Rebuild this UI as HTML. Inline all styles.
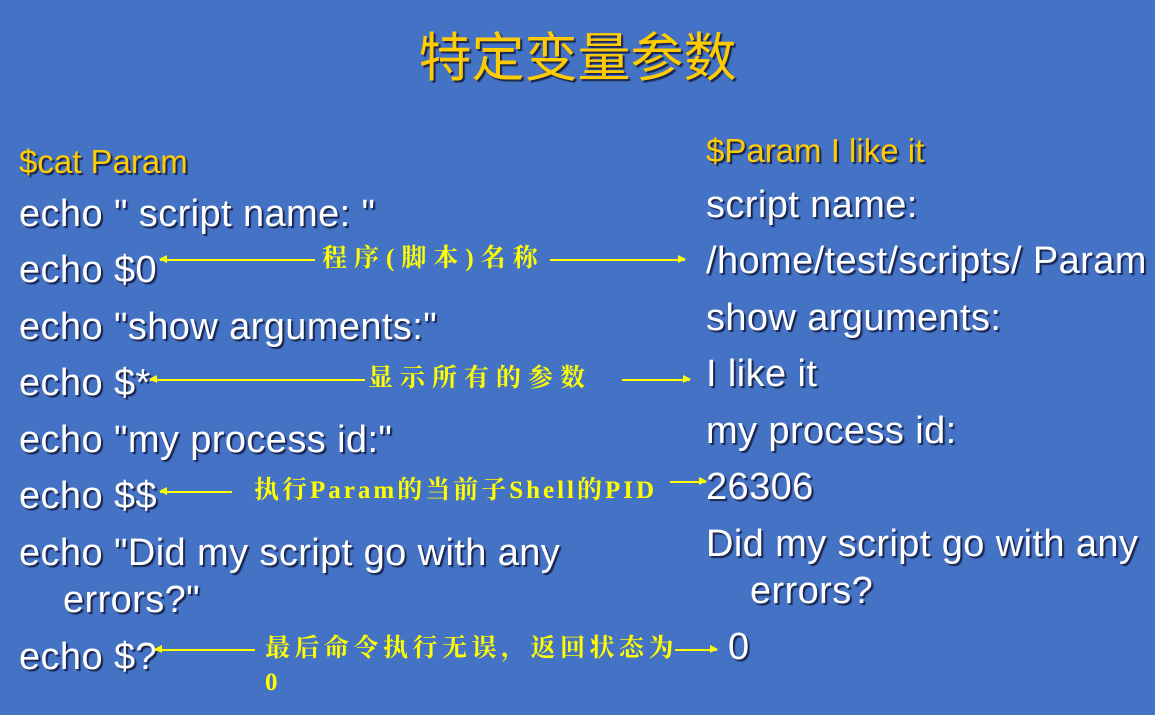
<!DOCTYPE html>
<html><head><meta charset="utf-8"><style>
body{margin:0;width:1155px;height:715px;background:#4472c4;position:relative;overflow:hidden;font-family:"Liberation Sans","Noto Sans CJK SC",sans-serif}
.t{position:absolute;white-space:nowrap;color:#fff;font-size:38px;line-height:40px;text-shadow:2px 2px 1px #1a2550;letter-spacing:0.4px}
.y{color:#ffcc00;font-size:33px;letter-spacing:0}
.a{position:absolute;white-space:nowrap;color:#ffff00;font-family:"Liberation Serif","Noto Serif CJK SC",serif;font-weight:bold;font-size:25px;line-height:26px}
.l{position:absolute;height:1.5px;background:#ffff00}
.lh:before{content:"";position:absolute;left:-1px;top:-4px;border:4.5px solid transparent;border-right:8px solid #ffff00;border-left:0}
.rh:after{content:"";position:absolute;right:-1px;top:-4px;border:4.5px solid transparent;border-left:8px solid #ffff00;border-right:0}
</style></head><body>
<div class="t" style="left:0;width:1155px;text-align:center;top:23px;font-size:53px;line-height:62px;color:#ffcc00;font-family:'Noto Sans CJK SC',sans-serif;letter-spacing:0">特定变量参数</div>

<div class="t y" style="left:19px;top:142px">$cat Param</div>
<div class="t" style="left:19px;top:194px">echo " script name: "</div>
<div class="t" style="left:19px;top:250px">echo $0</div>
<div class="t" style="left:19px;top:307px">echo "show arguments:"</div>
<div class="t" style="left:19px;top:363px">echo $*</div>
<div class="t" style="left:19px;top:420px">echo "my process id:"</div>
<div class="t" style="left:19px;top:476px">echo $$</div>
<div class="t" style="left:19px;top:533px">echo "Did my script go with any</div>
<div class="t" style="left:63px;top:580px">errors?"</div>
<div class="t" style="left:19px;top:637px">echo $?</div>

<div class="t y" style="left:706px;top:131px">$Param I like it</div>
<div class="t" style="left:706px;top:185px">script name:</div>
<div class="t" style="left:706px;top:241px">/home/test/scripts/ Param</div>
<div class="t" style="left:706px;top:298px">show arguments:</div>
<div class="t" style="left:706px;top:354px">I like it</div>
<div class="t" style="left:706px;top:411px">my process id:</div>
<div class="t" style="left:706px;top:467px">26306</div>
<div class="t" style="left:706px;top:524px">Did my script go with any</div>
<div class="t" style="left:750px;top:571px">errors?</div>
<div class="t" style="left:728px;top:627px">0</div>

<div class="l lh" style="left:160px;top:259px;width:155px"></div>
<div class="a" style="left:322px;top:246px;letter-spacing:7px">程序(脚本)名称</div>
<div class="l rh" style="left:550px;top:259px;width:135px"></div>

<div class="l lh" style="left:150px;top:379px;width:215px"></div>
<div class="a" style="left:368px;top:366px;letter-spacing:7px">显示所有的参数</div>
<div class="l rh" style="left:622px;top:379px;width:68px"></div>

<div class="l lh" style="left:160px;top:491px;width:72px"></div>
<div class="a" style="left:254px;top:478px;letter-spacing:3px">执行Param的当前子Shell的PID</div>
<div class="l rh" style="left:670px;top:481px;width:36px"></div>

<div class="l lh" style="left:155px;top:649px;width:100px"></div>
<div class="a" style="left:265px;top:636px;letter-spacing:4.5px">最后命令执行无误，返回状态为</div>
<div class="l rh" style="left:675px;top:649px;width:42px"></div>
<div class="a" style="left:265px;top:670px">0</div>
</body></html>
